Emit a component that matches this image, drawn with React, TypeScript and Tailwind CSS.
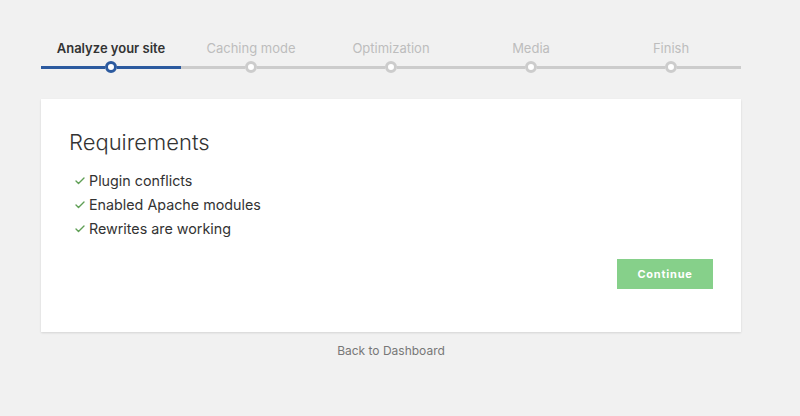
import { Check } from 'lucide-react'

const steps = ['Analyze your site', 'Caching mode', 'Optimization', 'Media', 'Finish']

const requirements = ['Plugin conflicts', 'Enabled Apache modules', 'Rewrites are working']

function Step({ label, index }: { label: string; index: number }) {
  const active = index === 0
  const line = active ? 'bg-[#2c5a9f]' : 'bg-[#cccccc]'
  return (
    <div className="flex flex-col items-stretch">
      <div
        className={`h-[22px] text-center text-[13px] leading-[22px] ${
          active ? 'font-semibold text-[#333333]' : 'text-[#bdbdbd]'
        }`}
      >
        {label}
      </div>
      <div className="mt-[2px] flex h-[12px] items-center">
        <div className={`h-[3px] flex-1 ${line}`} />
        <div
          className={`h-[12px] w-[12px] rounded-full border-[3px] bg-white ${
            active ? 'border-[#2c5a9f]' : 'border-[#cccccc]'
          }`}
        />
        <div className={`h-[3px] flex-1 ${line}`} />
      </div>
    </div>
  )
}

export default function App() {
  return (
    <div
      className="h-[416px] w-[800px] bg-[#f1f1f1] px-[41px] pt-[37px]"
      style={{ fontFamily: 'Inter, "Liberation Sans", sans-serif' }}
    >
      <div className="grid w-[700px] grid-cols-5">
        {steps.map((s, i) => (
          <Step key={s} label={s} index={i} />
        ))}
      </div>

      <div className="mt-[26px] w-[700px] bg-white px-[28px] pb-[43px] pt-[26px] shadow-[0_1px_2px_rgba(0,0,0,0.12)]">
        <h1 className="text-[22px] font-light leading-[34px] text-[#333333]">Requirements</h1>
        <ul className="mt-[10px] pl-[5px]">
          {requirements.map((r) => (
            <li key={r} className="flex items-center gap-[3px] text-[14.3px] leading-[24px] text-[#333333]">
              <Check className="h-[12px] w-[12px] text-[#5f9f55]" strokeWidth={2.75} />
              {r}
            </li>
          ))}
        </ul>
        <div className="mt-[18px] flex justify-end">
          <button
            type="button"
            className="h-[30px] w-[96px] bg-[#86d08a] text-[11px] font-bold tracking-[0.07em] text-white"
          >
            Continue
          </button>
        </div>
      </div>

      <div className="mt-[10px] w-[700px] text-center text-[12px] leading-[18px] text-[#777777]">
        Back to Dashboard
      </div>
    </div>
  )
}
